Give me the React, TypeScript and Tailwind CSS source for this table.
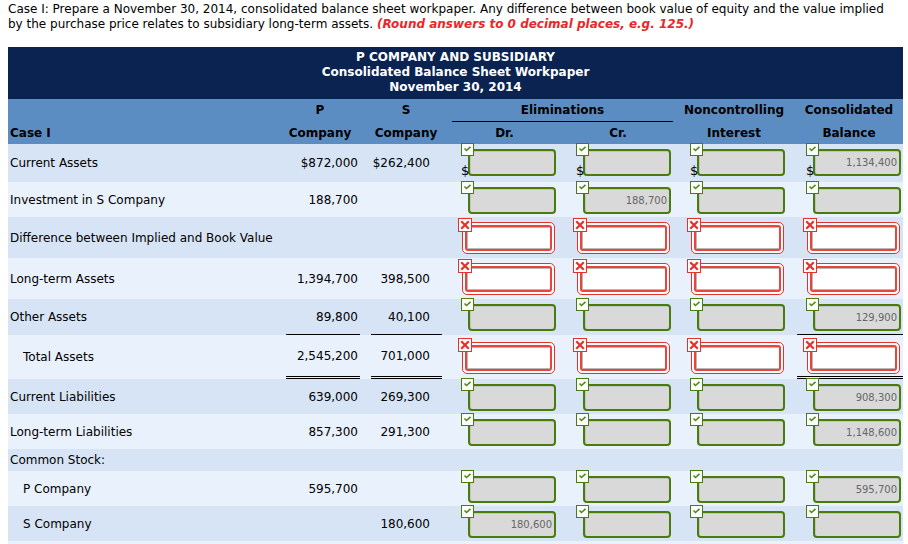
import React from "react";

type Cell = "g" | "g$" | "r";
interface Row {
  label: string;
  indent?: boolean;
  p?: string;
  s?: string;
  h: string;
  dark: boolean;
  cells?: Cell[];
  vals?: string[];
  line?: "single" | "double";
  boxTop?: string;
}

const rows: Row[] = [
  { label: "Current Assets", p: "$872,000", s: "$262,400", h: "h-[38px]", dark: true, cells: ["g$", "g$", "g$", "g$"], vals: ["", "", "", "1,134,400"] },
  { label: "Investment in S Company", p: "188,700", h: "h-[35px]", dark: false, cells: ["g", "g", "g", "g"], vals: ["", "188,700", "", ""] },
  { label: "Difference between Implied and Book Value", h: "h-[41px]", dark: true, cells: ["r", "r", "r", "r"] },
  { label: "Long-term Assets", p: "1,394,700", s: "398,500", h: "h-[41px]", dark: false, cells: ["r", "r", "r", "r"] },
  { label: "Other Assets", p: "89,800", s: "40,100", h: "h-[36px]", dark: true, cells: ["g", "g", "g", "g"], vals: ["", "", "", "129,900"], line: "single" },
  { label: "Total Assets", indent: true, p: "2,545,200", s: "701,000", h: "h-[44px]", dark: false, cells: ["r", "r", "r", "r"], line: "double", boxTop: "pt-[7px]" },
  { label: "Current Liabilities", p: "639,000", s: "269,300", h: "h-[35px]", dark: true, cells: ["g", "g", "g", "g"], vals: ["", "", "", "908,300"] },
  { label: "Long-term Liabilities", p: "857,300", s: "291,300", h: "h-[35px]", dark: false, cells: ["g", "g", "g", "g"], vals: ["", "", "", "1,148,600"] },
  { label: "Common Stock:", h: "h-[22px]", dark: true },
  { label: "P Company", indent: true, p: "595,700", h: "h-[35px]", dark: false, cells: ["g", "g", "g", "g"], vals: ["", "", "", "595,700"] },
  { label: "S Company", indent: true, s: "180,600", h: "h-[35px]", dark: true, cells: ["g", "g", "g", "g"], vals: ["180,600", "", "", ""] },
];

function CheckIcon() {
  return (
    <svg width="13" height="13" viewBox="0 0 13 13" className="absolute left-0 top-[-6px] z-10">
      <rect x="0.5" y="0.5" width="12" height="12" fill="#ffffff" stroke="#4a7c0c" strokeWidth="1" />
      <polyline points="3.5,5.5 5.5,7.5 9.5,3.8" fill="none" stroke="#4a8c14" strokeWidth="1.6" />
    </svg>
  );
}

function XIcon() {
  return (
    <svg width="14" height="14" viewBox="0 0 14 14" className="absolute left-[-3px] top-[-4px] z-10">
      <rect x="0.5" y="0.5" width="13" height="13" fill="#ffffff" stroke="#e3322b" strokeWidth="1" />
      <path d="M4 4 L10 10 M10 4 L4 10" stroke="#e3322b" strokeWidth="2.2" strokeLinecap="square" />
    </svg>
  );
}

function GreenBox({ value, dollar }: { value?: string; dollar?: boolean }) {
  return (
    <div className="relative w-[95px] h-[27px]">
      <CheckIcon />
      {dollar && (
        <span className="absolute left-0 bottom-[-1px] text-[13px] leading-none text-black">$</span>
      )}
      <div className="ml-[7px] w-[88px] h-[27px] rounded-[4px] border-2 border-[#4a7c0c] bg-[#d9d9d9] flex items-center justify-end pr-[2px] text-[10px] text-[#666666] shadow-[inset_1px_1px_0_#c4c4c4]">
        {value}
      </div>
    </div>
  );
}

function RedBox() {
  return (
    <div className="relative w-[95px] h-[32px]">
      <XIcon />
      <div className="ml-[1px] w-[93px] h-[32px] rounded-[5px] border border-[#e3322b] bg-white p-[2px]">
        <div className="w-full h-full rounded-[3px] border-2 border-[#e8453c] bg-white shadow-[inset_1px_1px_0_#b8b8b8,inset_0_-1px_0_#b8b8b8]" />
      </div>
    </div>
  );
}

function InputCell({ type, value, pad, top }: { type?: Cell; value?: string; pad: string; top: string }) {
  if (!type) return null;
  return (
    <div className={`${pad} ${top}`}>
      {type === "r" ? <RedBox /> : <GreenBox value={value} dollar={type === "g$"} />}
    </div>
  );
}

export default function App() {
  const font = { fontFamily: '"DejaVu Sans", Verdana, sans-serif' };
  return (
    <div className="bg-white w-[908px] min-h-[544px] text-black" style={font}>
      <div className="px-[8px] pt-[2px] text-[12px] leading-[15px]">
        Case I: Prepare a November 30, 2014, consolidated balance sheet workpaper. Any difference between book value of equity and the value implied
        <br />
        by the purchase price relates to subsidiary long-term assets.{" "}
        <span className="font-bold italic text-[#e8262b]">(Round answers to 0 decimal places, e.g. 125.)</span>
      </div>

      <div className="ml-[8px] mt-[15px] w-[895px]">
        <div className="bg-[#0b2350] text-white font-bold text-[12px] leading-[15px] text-center pt-[3px] pb-[4px]">
          <div>P COMPANY AND SUBSIDIARY</div>
          <div>Consolidated Balance Sheet Workpaper</div>
          <div>November 30, 2014</div>
        </div>

        <div className="bg-[#5b8dc3] font-bold text-[12px] text-black flex h-[45px]">
          <div className="w-[275px] flex flex-col pl-[2px]">
            <div className="h-[22px]" />
            <div className="h-[23px] flex items-center">Case I</div>
          </div>
          <div className="w-[80px] flex flex-col items-center pr-[6px]">
            <div className="h-[22px] flex items-center">P</div>
            <div className="h-[23px] flex items-center">Company</div>
          </div>
          <div className="w-[83px] flex flex-col items-center pl-[3px]">
            <div className="h-[22px] flex items-center">S</div>
            <div className="h-[23px] flex items-center">Company</div>
          </div>
          <div className="w-[227px] flex flex-col">
            <div className="h-[23px] ml-[6px] flex items-center justify-center border-b border-black">Eliminations</div>
            <div className="h-[22px] flex">
              <div className="w-[117px] flex items-center justify-center">Dr.</div>
              <div className="w-[110px] flex items-center justify-center">Cr.</div>
            </div>
          </div>
          <div className="w-[122px] flex flex-col items-center">
            <div className="h-[22px] flex items-center">Noncontrolling</div>
            <div className="h-[23px] flex items-center">Interest</div>
          </div>
          <div className="w-[108px] flex flex-col items-center">
            <div className="h-[22px] flex items-center">Consolidated</div>
            <div className="h-[23px] flex items-center">Balance</div>
          </div>
        </div>

        {rows.map((r, i) => {
          const top = r.boxTop ?? "pt-[5px]";
          const lineCls =
            r.line === "single" ? "border-b border-black" : r.line === "double" ? "border-b-[3px] border-double border-black" : "";
          return (
            <div key={i} className={`flex text-[12px] ${r.h} ${r.dark ? "bg-[#d7e4f5]" : "bg-[#e9f1fc]"}`}>
              <div className={`w-[275px] flex items-center ${r.indent ? "pl-[15px]" : "pl-[2px]"}`}>{r.label}</div>
              <div className="w-[80px] px-[3px]">
                <div className={`h-full flex items-center justify-end pr-[2px] ${lineCls}`}>{r.p}</div>
              </div>
              <div className="w-[83px] pl-[8px] pr-[4px]">
                <div className={`h-full flex items-center justify-end pr-[12px] ${lineCls}`}>{r.s}</div>
              </div>
              <div className="w-[117px]">
                <InputCell type={r.cells?.[0]} value={r.vals?.[0]} pad="pl-[15px]" top={top} />
              </div>
              <div className="w-[110px]">
                <InputCell type={r.cells?.[1]} value={r.vals?.[1]} pad="pl-[13px]" top={top} />
              </div>
              <div className="w-[122px]">
                <InputCell type={r.cells?.[2]} value={r.vals?.[2]} pad="pl-[17px]" top={top} />
              </div>
              <div className="w-[108px] pl-[2px]">
                <div className={`h-full ${lineCls}`}>
                  <InputCell type={r.cells?.[3]} value={r.vals?.[3]} pad="pl-[9px]" top={top} />
                </div>
              </div>
            </div>
          );
        })}
        <div className="h-[35px] bg-[#e9f1fc]" />
      </div>
    </div>
  );
}
